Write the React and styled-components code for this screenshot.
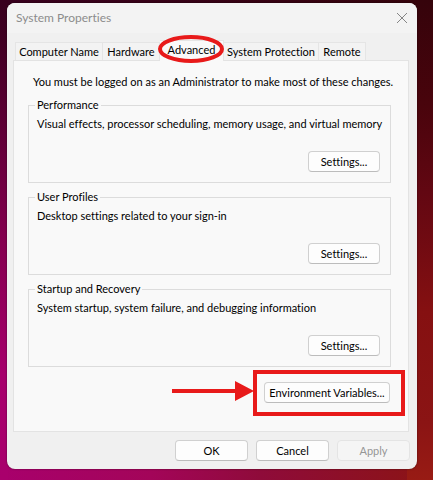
import React, { useState } from "react";
import styled, { createGlobalStyle } from "styled-components";

const GlobalStyle = createGlobalStyle`
  * { box-sizing: border-box; }
  body { margin: 0; }
  body, button {
    font-family: Lato, "Liberation Sans", sans-serif;
    font-size: 11px;
    line-height: 16px;
    font-variant-ligatures: none;
    color: #000;
  }
`;

const Desktop = styled.main`
  min-height: 100vh;
  padding: 3px 16px 10px 7px;
  background:
    linear-gradient(180deg, #38001e 0%, #400022 8%, #84004f 50%, #a6006c 78%, #a9006c 100%) left / 8px 100% no-repeat,
    linear-gradient(180deg, #35030b 0%, #49040c 22%, #620712 40%, #851011 65%, #8b1414 88%, #981b14 100%) right / 26px 100% no-repeat,
    linear-gradient(90deg, #38001e, #35030b) top / 100% 24px no-repeat,
    linear-gradient(90deg, #a8006c 0%, #a30559 35%, #8f0b3a 60%, #8b1414 100%);
`;

const Dialog = styled.section`
  border-radius: 8px;
  background: #f0f0f0;
  overflow: hidden;
  box-shadow: 0 0 2px #0008;
`;

const TitleBar = styled.header`
  display: flex;
  align-items: center;
  justify-content: space-between;
  height: 30px;
  padding: 0 6px 0 9px;
  background: #f3f3f3;
`;

const Title = styled.h1`
  margin: 0;
  font-size: 12px;
  font-weight: 400;
  color: #8c8c8c;
`;

const CloseButton = styled.button`
  display: grid;
  place-items: center;
  width: 18px;
  height: 18px;
  padding: 0;
  border: 0;
  background: none;
  svg { display: block; }
`;

const TabList = styled.div`
  display: flex;
  align-items: flex-end;
  margin: 7px 8px 0;
  height: 20px;
`;

const Tab = styled.button`
  position: relative;
  flex: 0 0 ${(p) => p.$width}px;
  height: ${(p) => (p.$active ? 21 : 18)}px;
  margin-bottom: ${(p) => (p.$active ? -1 : 0)}px;
  padding: ${(p) => (p.$active ? "0 0 2px" : 0)};
  border: 1px solid #e5e5e5;
  border-bottom: 0;
  border-left-width: ${(p) => (p.$joined ? 0 : 1)}px;
  background: ${(p) => (p.$active ? "#f9f9f9" : "#f3f3f3")};
  white-space: nowrap;
  z-index: ${(p) => (p.$active ? 1 : 0)};
`;

const Ring = styled.svg`
  position: absolute;
  inset: -6px -3px auto -4px;
  overflow: visible;
  pointer-events: none;
`;

const Panel = styled.div`
  margin: 0 8px 0 6px;
  padding: 13px 17px 15px 14px;
  border: 1px solid #e3e3e3;
  background: #f9f9f9;
`;

const Note = styled.p`
  margin: 0 0 7px 5px;
  white-space: nowrap;
`;

const Group = styled.fieldset`
  display: flex;
  flex-direction: column;
  height: 86px;
  min-width: 0;
  margin: 0 0 6px;
  padding: 3px 10px 10px 8px;
  border: 1px solid #dcdcdc;
`;

const Legend = styled.legend`
  margin-left: -2px;
  padding: 0 2px;
`;

const Description = styled.p`
  margin: 0;
  white-space: nowrap;
`;

const PushButton = styled.button`
  flex: none;
  width: ${(p) => p.$width}px;
  height: 21px;
  padding: 0;
  border: 1px solid #d0d0d0;
  border-bottom-color: #bcbcbc;
  border-radius: 4px;
  background: #fdfdfd;
  white-space: nowrap;
  &:disabled {
    border-color: #e4e4e4;
    background: #f5f5f5;
    color: #969696;
  }
`;

const GroupAction = styled.div`
  display: flex;
  justify-content: flex-end;
  margin-top: auto;
`;

const CalloutRow = styled.div`
  display: flex;
  justify-content: flex-end;
  margin: -3px -14px 0 0;
`;

const Callout = styled.div`
  position: relative;
  display: flex;
  padding: 8px 11px 9px 7px;
  border: 4px solid #e81a1a;
`;

const Arrow = styled.svg`
  position: absolute;
  right: calc(100% + 3px);
  top: 7px;
`;

const Footer = styled.footer`
  display: flex;
  justify-content: flex-end;
  gap: 8px;
  padding: 8px 7px 8px;
`;

const tabs = [
  { name: "Computer Name", width: 88 },
  { name: "Hardware", width: 57 },
  { name: "Advanced", width: 64 },
  { name: "System Protection", width: 95 },
  { name: "Remote", width: 47 },
];

const groups = [
  { title: "Performance", text: "Visual effects, processor scheduling, memory usage, and virtual memory" },
  { title: "User Profiles", text: "Desktop settings related to your sign-in" },
  { title: "Startup and Recovery", text: "System startup, system failure, and debugging information" },
];

export default function App() {
  const [active, setActive] = useState("Advanced");
  return (
    <>
      <GlobalStyle />
      <Desktop>
        <Dialog role="dialog" aria-labelledby="dialog-title">
          <TitleBar>
            <Title id="dialog-title">System Properties</Title>
            <CloseButton aria-label="Close">
              <svg width="12" height="12" viewBox="0 0 12 12" fill="none" stroke="#858585">
                <path d="M1 1l10 10M11 1L1 11" />
              </svg>
            </CloseButton>
          </TitleBar>
          <TabList role="tablist">
            {tabs.map(({ name, width }, i) => (
              <Tab
                key={name}
                role="tab"
                aria-selected={active === name}
                $active={active === name}
                $joined={i > 0}
                $width={width}
                onClick={() => setActive(name)}
              >
                {name}
                {name === "Advanced" && (
                  <Ring width="68" height="28" viewBox="0 0 68 28" fill="none" aria-hidden="true">
                    <ellipse cx="35" cy="14" rx="31" ry="12" stroke="#e81a1a" strokeWidth="4" />
                  </Ring>
                )}
              </Tab>
            ))}
          </TabList>
          <Panel role="tabpanel" aria-label={active}>
            <Note>You must be logged on as an Administrator to make most of these changes.</Note>
            {groups.map(({ title, text }) => (
              <Group key={title}>
                <Legend>{title}</Legend>
                <Description>{text}</Description>
                <GroupAction>
                  <PushButton $width={72}>Settings...</PushButton>
                </GroupAction>
              </Group>
            ))}
            <CalloutRow>
              <Callout>
                <Arrow width="82" height="20" viewBox="0 0 82 20" fill="#e81a1a" aria-hidden="true">
                  <path d="M0 8h63V0l19 10-19 10v-8H0z" />
                </Arrow>
                <PushButton $width={126}>Environment Variables...</PushButton>
              </Callout>
            </CalloutRow>
          </Panel>
          <Footer>
            <PushButton $width={73}>OK</PushButton>
            <PushButton $width={73}>Cancel</PushButton>
            <PushButton $width={73} disabled>Apply</PushButton>
          </Footer>
        </Dialog>
      </Desktop>
    </>
  );
}
